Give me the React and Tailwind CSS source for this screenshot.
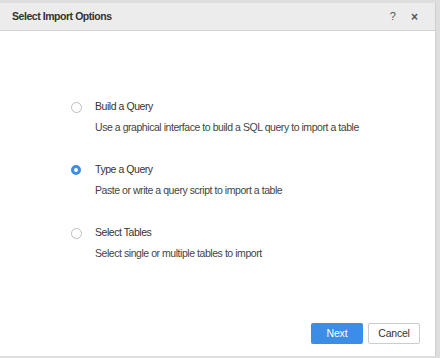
export default function App() {
  const opts = [
    { label: "Build a Query", desc: "Use a graphical interface to build a SQL query to import a table", checked: false },
    { label: "Type a Query", desc: "Paste or write a query script to import a table", checked: true },
    { label: "Select Tables", desc: "Select single or multiple tables to import", checked: false },
  ];
  return (
    <div className="w-[440px] h-[358px] bg-[#dedede] overflow-hidden" style={{ fontFamily: '"Liberation Sans", Arial, sans-serif' }}>
      <div className="mt-[3px] w-[436px] h-[353px] bg-white flex flex-col border-r border-[#cfcfcf]">
        <div className="h-[28px] bg-[#ececec] border-b border-[#d4d4d4] flex items-center pl-[12px] pr-[17px]">
          <div className="text-[10.5px] tracking-[-0.45px] font-bold text-[#333]">Select Import Options</div>
          <div className="ml-auto flex items-center gap-[15px] text-[#555]">
            <span className="text-[11px]">?</span>
            <span className="text-[12px] font-bold leading-none">×</span>
          </div>
        </div>
        <div className="flex-1 flex flex-col pt-[68px] pl-[71px] gap-[28px]">
          {opts.map((o) => (
            <div key={o.label} className="flex flex-col">
              <div className="flex items-center h-[16px]">
                {o.checked ? (
                  <div className="w-[10px] h-[10px] rounded-full border-[3px] border-[#3b8de6] bg-white" />
                ) : (
                  <div className="w-[11px] h-[11px] rounded-full border border-[#bdbdbd] bg-white" />
                )}
                <span className={`${o.checked ? "ml-[14px]" : "ml-[13px]"} text-[10.5px] tracking-[-0.45px] text-[#333]`}>{o.label}</span>
              </div>
              <div className="ml-[24px] mt-[5px] h-[14px] leading-[14px] text-[10.5px] tracking-[-0.45px] text-[#444]">{o.desc}</div>
            </div>
          ))}
        </div>
        <div className="flex justify-end gap-[5px] pr-[15px] pb-[12px]">
          <button className="w-[52px] h-[21px] bg-[#3b8de6] text-white text-[10.5px] tracking-[-0.2px] rounded-[2px]">Next</button>
          <button className="w-[52px] h-[21px] bg-white border border-[#ccc] text-[#333] text-[10.5px] tracking-[-0.2px] rounded-[2px]">Cancel</button>
        </div>
      </div>
    </div>
  );
}
